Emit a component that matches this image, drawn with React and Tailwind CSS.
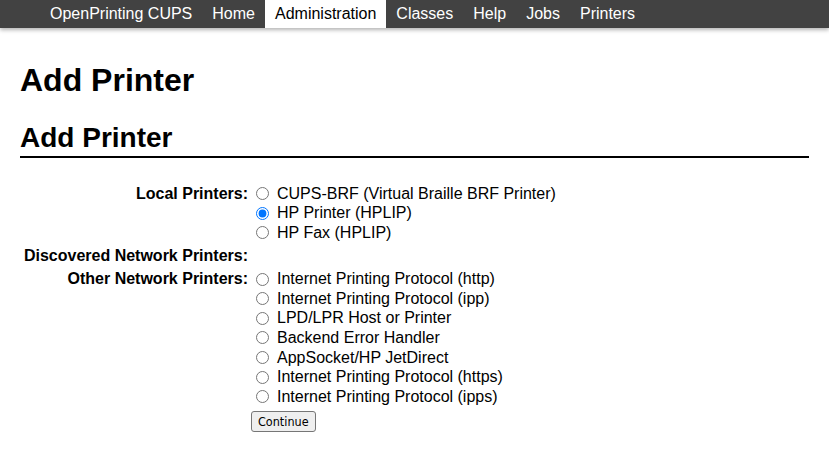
import React from "react";

const nav = ["OpenPrinting CUPS", "Home", "Administration", "Classes", "Help", "Jobs", "Printers"];
const local = [
  ["CUPS-BRF (Virtual Braille BRF Printer)", false],
  ["HP Printer (HPLIP)", true],
  ["HP Fax (HPLIP)", false],
];
const other = [
  "Internet Printing Protocol (http)",
  "Internet Printing Protocol (ipp)",
  "LPD/LPR Host or Printer",
  "Backend Error Handler",
  "AppSocket/HP JetDirect",
  "Internet Printing Protocol (https)",
  "Internet Printing Protocol (ipps)",
];

function Radio({ checked, name }) {
  return (
    <label className="flex items-center h-[19.6px]">
      <input
        type="radio"
        name="device"
        defaultChecked={checked}
        className="w-[13px] h-[13px] ml-[8px] mr-[8px] accent-[#0075ff]"
      />
      <span>{name}</span>
    </label>
  );
}

export default function App() {
  return (
    <div className="min-h-[475px] bg-white text-black text-[16px]" style={{ fontFamily: '"Liberation Sans", Arial, sans-serif' }}>
      <div className="h-[28px] bg-[#424242] flex items-stretch pl-[40px] shadow-[0_2px_4px_rgba(0,0,0,0.3)]">
        {nav.map((n) => (
          <div
            key={n}
            className={
              "px-[10px] flex items-center leading-none " +
              (n === "Administration" ? "bg-white text-black" : "text-white")
            }
          >
            {n}
          </div>
        ))}
      </div>
      <div className="px-[20px]">
        <h1 className="text-[32px] font-bold leading-[37px] mt-[34px]">Add Printer</h1>
        <h2 className="text-[28px] font-bold leading-[32px] mt-[23px] pb-[2px] border-b-2 border-black">Add Printer</h2>
        <div className="mt-[26px] grid grid-cols-[228px_1fr]">
          <div className="font-bold text-right h-[19.6px] leading-[19.6px]">Local Printers:</div>
          <div>
            {local.map(([n, c]) => (
              <Radio key={n} name={n} checked={c} />
            ))}
          </div>
          <div className="font-bold text-right pt-[3px] pb-[3px] leading-[19.6px] whitespace-nowrap">Discovered Network Printers:</div>
          <div></div>
          <div className="font-bold text-right mt-[1px] h-[19.6px] leading-[19.6px]">Other Network Printers:</div>
          <div className="mt-[1px]">
            {other.map((n) => (
              <Radio key={n} name={n} />
            ))}
          </div>
          <div></div>
          <div className="pt-[2px]">
            <button className="ml-[3px] h-[21px] px-[6px] bg-[#efefef] border border-[#767676] rounded-[3px] leading-none" style={{ fontFamily: '"DejaVu Sans Condensed", "DejaVu Sans", sans-serif', fontSize: "12.5px" }}>
              Continue
            </button>
          </div>
        </div>
      </div>
    </div>
  );
}
